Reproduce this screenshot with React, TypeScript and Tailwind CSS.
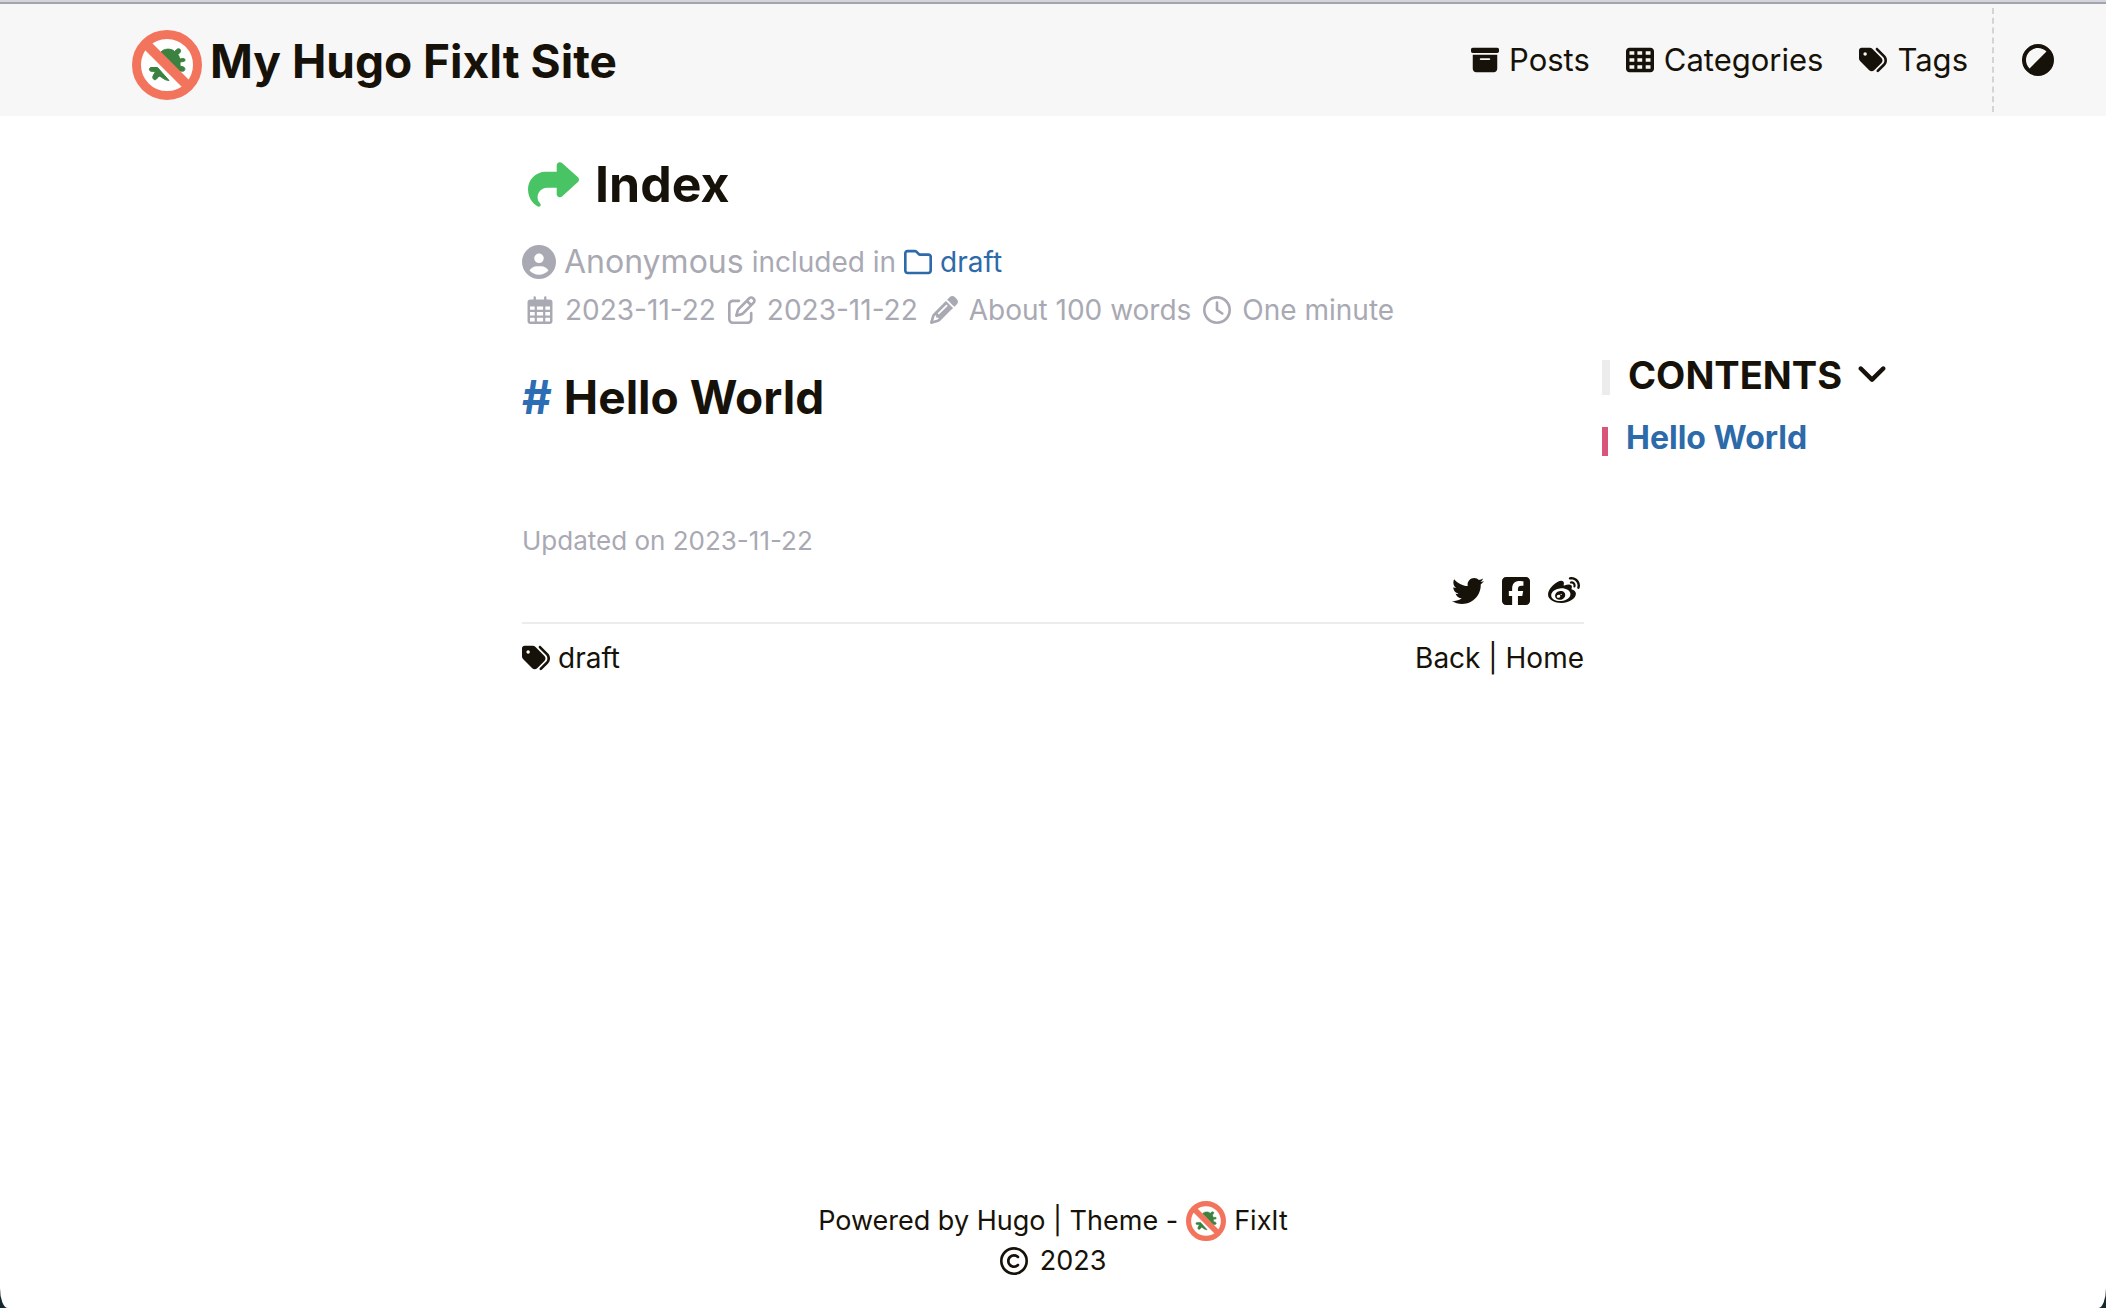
import React from "react";
import {
  FaAngleDown,
  FaBoxArchive,
  FaCircleHalfStroke,
  FaCircleUser,
  FaPencil,
  FaRegClock,
  FaRegCopyright,
  FaRegFolder,
  FaRegPenToSquare,
  FaShare,
  FaSquareFacebook,
  FaTableCells,
  FaTags,
  FaTwitter,
  FaWeibo,
} from "react-icons/fa6";

function Logo({ className }: { className: string }) {
  return (
    <svg viewBox="0 0 70 70" className={className} aria-hidden="true">
      <circle cx="35" cy="35" r="30.5" fill="#fff" stroke="#f3745c" strokeWidth="9" />
      <g fill="#3b8140" stroke="#3b8140" strokeWidth="1" strokeLinejoin="round">
        <path d="M29 22C32 18.500 39 18 42.500 21.500L45.500 19C48 18 49.500 20.500 48 22.500L46 24.500C47 26 47.500 27.500 47.500 29L51.500 28.500C53.500 28.500 53.500 31.500 51.500 31.500L48 32V36L51.500 37C53.800 38 53 41.500 50.500 41.200L47 41Z" />
        <path d="M25.500 37.500H19C16.800 37.800 17 41 19 41.200L23.500 41.500L21 46C20 48.500 22.500 51 24.500 49L27 46C30 46.500 32 50.500 37 50.500Z" />
      </g>
      <path d="M14 14L56 56" stroke="#f3745c" strokeWidth="10" />
    </svg>
  );
}

function CalendarIcon({ className }: { className?: string }) {
  return (
    <svg viewBox="0 0 28 28" className={className} fill="currentColor" aria-hidden="true">
      <path
        fillRule="evenodd"
        d="M7.500 1.500a1.200 1.200 0 0 1 2.400 0V3.500h8.200V1.500a1.200 1.200 0 0 1 2.400 0V3.500h3A3 3 0 0 1 26.500 6.500V25a3 3 0 0 1-3 3h-19A3 3 0 0 1 1.500 25V6.500a3 3 0 0 1 3-3h3ZM4 10.500v3.200h4.700v-3.200ZM10.900 10.500v3.200h6.200v-3.200ZM19.300 10.500v3.200h4.700v-3.200ZM4 15.900v3.700h4.700v-3.700ZM10.900 15.900v3.700h6.200v-3.700ZM19.300 15.900v3.700h4.700v-3.700ZM4 21.800V25a.6.6 0 0 0 .6.600h4.100v-3.800ZM10.900 21.800v3.800h6.200v-3.800ZM19.300 21.800v3.800h4.100A.6.6 0 0 0 24 25v-3.200Z"
      />
    </svg>
  );
}

const menu = [
  { label: "Posts", Icon: FaBoxArchive },
  { label: "Categories", Icon: FaTableCells },
  { label: "Tags", Icon: FaTags },
];

const shares = [
  { label: "Share on Twitter", Icon: FaTwitter },
  { label: "Share on Facebook", Icon: FaSquareFacebook },
  { label: "Share on Weibo", Icon: FaWeibo },
];

const details = [
  { text: "2023-11-22", Icon: CalendarIcon },
  { text: "2023-11-22", Icon: FaRegPenToSquare },
  { text: "About 100 words", Icon: FaPencil },
  { text: "One minute", Icon: FaRegClock },
];

function Header() {
  return (
    <header className="border-t-2 border-[#d3d4dc] bg-[#f7f7f7]">
      <div className="flex h-[114px] items-stretch justify-between border-t-2 border-[#a3a5ad] pl-[132px]">
        <a href="#" className="flex items-center gap-2 pt-[6px]">
          <Logo className="mt-1 size-[70px]" />
          <span className="pb-1 text-[46px] leading-[56px] font-bold">My Hugo FixIt Site</span>
        </a>
        <div className="flex">
          <nav className="flex items-center gap-9 pr-6">
            {menu.map(({ label, Icon }) => (
              <a key={label} href="#" className="flex items-center gap-[10px] text-[31px] leading-9">
                <Icon className="size-7" />
                {label}
              </a>
            ))}
          </nav>
          <div className="my-1 flex items-center border-l-2 border-dashed border-[#d4d4d6] pr-[52px] pl-7">
            <button type="button" aria-label="Switch theme">
              <FaCircleHalfStroke className="size-8 rotate-[-135deg]" />
            </button>
          </div>
        </div>
      </div>
    </header>
  );
}

function Article() {
  return (
    <article className="min-w-0">
      <h1 className="flex items-center gap-4 text-[50px] leading-[60px] font-bold">
        <FaShare className="ml-[6px] size-[51px] text-[#48c464]" />
        Index
      </h1>
      <div className="mt-6 text-[28px] leading-[48px] text-[#a9a9b3]">
        <div className="flex items-center gap-2">
          <a href="#" className="flex items-center gap-2 text-[32px]">
            <FaCircleUser className="size-[34px]" />
            Anonymous
          </a>
          <span>included in</span>
          <a href="#" className="flex items-center gap-2 text-[#2d6aa9]">
            <FaRegFolder className="size-7" />
            draft
          </a>
        </div>
        <div className="flex flex-wrap items-center gap-3 pl-1">
          {details.map(({ text, Icon }, i) => (
            <span key={i} className="flex items-center gap-[11px]">
              <Icon className="size-7" />
              {text}
            </span>
          ))}
        </div>
      </div>
      <h2 className="mt-[35px] text-[46px] leading-[56px] font-bold">
        <a href="#" className="mr-3 text-[#2d6db3]">
          #
        </a>
        Hello World
      </h2>
      <p className="mt-24 text-[26px] leading-10 text-[#a9a9b3]">Updated on 2023-11-22</p>
      <div className="flex justify-end gap-4 border-b-2 border-[#ececec] pt-[14px] pr-1 pb-[15px]">
        {shares.map(({ label, Icon }) => (
          <a key={label} href="#" aria-label={label}>
            <Icon className="size-8" />
          </a>
        ))}
      </div>
      <div className="flex items-center justify-between pt-4 text-[28px] leading-9">
        <a href="#" className="flex items-center gap-2">
          <FaTags className="size-7" />
          draft
        </a>
        <div>
          <a href="#">Back</a> | <a href="#">Home</a>
        </div>
      </div>
    </article>
  );
}

function Contents() {
  return (
    <aside className="pt-[198px] pl-[18px]">
      <h2>
        <button type="button" className="flex items-center text-[38px] leading-[46px] font-bold">
          <span className="mr-[18px] mb-[3px] h-[35px] w-2 self-end bg-[#ececec]" />
          CONTENTS
          <FaAngleDown className="mb-1 ml-3 size-9" />
        </button>
      </h2>
      <a href="#" className="mt-5 flex items-center text-[32px] leading-10 font-bold text-[#2d6aa9]">
        <span className="mr-[18px] mb-[2px] h-[29px] w-[6px] self-end bg-[#d9557a]" />
        Hello World
      </a>
    </aside>
  );
}

export default function App() {
  return (
    <div className="bg-[#14282d] font-['Inter','Liberation_Sans',sans-serif] text-[#161209]">
      <div className="flex min-h-screen flex-col rounded-[0_0_8px_8px/0_0_20px_20px] bg-white">
        <Header />
        <main className="grid flex-1 grid-cols-[1fr_minmax(0,1062px)_1fr] pt-[38px]">
          <div />
          <Article />
          <Contents />
        </main>
        <footer className="pb-[27px] text-center text-[27px] leading-10">
          <div className="flex items-center justify-center gap-2">
            <span>
              Powered by <a href="#">Hugo</a> | Theme -
            </span>
            <a href="#" className="flex items-center gap-2">
              <Logo className="size-10" />
              FixIt
            </a>
          </div>
          <div className="flex items-center justify-center gap-3">
            <FaRegCopyright className="size-7" />
            2023
          </div>
        </footer>
      </div>
    </div>
  );
}
